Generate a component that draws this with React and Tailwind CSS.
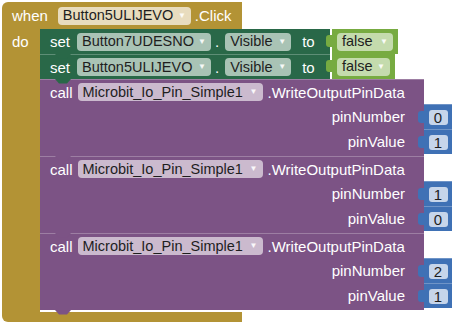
const tones = {
  gold: 'bg-[#e8dcbe]',
  green: 'bg-[#a9c3b5]',
  purple: 'bg-[#cbbace]',
  lime: 'bg-[#c4dbad]',
};

function Field({ tone, children, className = '' }) {
  return (
    <span className={`${tones[tone]} ${className} flex h-[18px] items-center justify-between rounded-[4px] pl-[5px] pr-[5px] text-[14.5px] text-[#1e1e1e]`}>
      {children}
      <span className="text-[8px] text-white/90">▼</span>
    </span>
  );
}

function Notch({ fill }) {
  return (
    <svg className="absolute left-[15px] top-full z-10" width="16" height="5" viewBox="0 0 16 5">
      <path d="M0 0 L4 4.5 L12 4.5 L16 0 Z" fill={fill} />
    </svg>
  );
}

function SetRow({ name, first }) {
  return (
    <div className="flex items-center">
      <div className={`relative flex h-[25px] w-[290px] items-center bg-[#296848] pl-[10px] text-white ${first ? '' : 'border-t border-white/25'}`}>
        <span>set</span>
        <Field tone="green" className="ml-[7px] w-[134px]">{name}</Field>
        <span className="ml-[4px]">.</span>
        <Field tone="green" className="ml-[6px] w-[66px]">Visible</Field>
        <span className="ml-[11px]">to</span>
        <Notch fill="#296848" />
      </div>
      <div className="relative ml-[2px] flex h-[25px] items-center bg-[#77ab41] pl-[5px] pr-[5px]">
        <span className="absolute left-[-6px] top-[6px] h-[12px] w-[6px] rounded-l-[3px] bg-[#77ab41]" />
        <Field tone="lime" className={first ? 'w-[56px]' : 'w-[53px]'}>false</Field>
      </div>
    </div>
  );
}

function PinRow({ label, value }) {
  return (
    <div className="flex">
      <div className="flex h-[25px] w-[384px] items-center justify-end bg-[#7c5385] pr-[19px] text-white">{label}</div>
      <div className="relative flex h-[25px] w-[28px] items-center justify-center border-t border-white/25 bg-[#3f71b5]">
        <span className="absolute left-[-6px] top-[6px] h-[12px] w-[6px] rounded-l-[3px] bg-[#3f71b5]" />
        <span className="flex h-[15px] w-[19px] items-center justify-center rounded-[3px] bg-[#c6d5ea] text-[#1e1e1e]">{value}</span>
      </div>
    </div>
  );
}

function CallBlock({ pins }) {
  return (
    <div className="relative flex flex-col">
      <div className="flex h-[25px] w-[384px] items-center border-t border-white/25 bg-[#7c5385] pl-[10px] text-white">
        <span>call</span>
        <Field tone="purple" className="ml-[5px] w-[185px]">Microbit_Io_Pin_Simple1</Field>
        <span className="ml-[5px]">.WriteOutputPinData</span>
      </div>
      <PinRow label="pinNumber" value={pins[0]} />
      <PinRow label="pinValue" value={pins[1]} />
      <div className="relative h-[2px] w-[384px] bg-[#7c5385]">
        <Notch fill="#7c5385" />
      </div>
    </div>
  );
}

export default function App() {
  return (
    <div className="h-[327px] w-[456px] overflow-hidden bg-white font-['Liberation_Sans',Arial,sans-serif] text-[15px] leading-none">
      <div className="pl-[2px] pt-[2px]">
        <div className="flex h-[27px] w-[240px] items-center rounded-tl-[6px] bg-[#b39335] pl-[10px] text-white">
          <span>when</span>
          <Field tone="gold" className="ml-[10px] w-[133px]">Button5ULIJEVO</Field>
          <span className="ml-[4px]">.Click</span>
        </div>
        <div className="flex">
          <div className="w-[38px] bg-[#b39335] pl-[10px] pt-[5px] text-white">do</div>
          <div className="flex flex-col pb-[2px]">
            <SetRow name="Button7UDESNO" first />
            <SetRow name="Button5ULIJEVO" />
            <CallBlock pins={[0, 1]} />
            <CallBlock pins={[1, 0]} />
            <CallBlock pins={[2, 1]} />
          </div>
        </div>
        <div className="h-[10px] w-[240px] rounded-bl-[6px] bg-[#b39335]" />
      </div>
    </div>
  );
}
